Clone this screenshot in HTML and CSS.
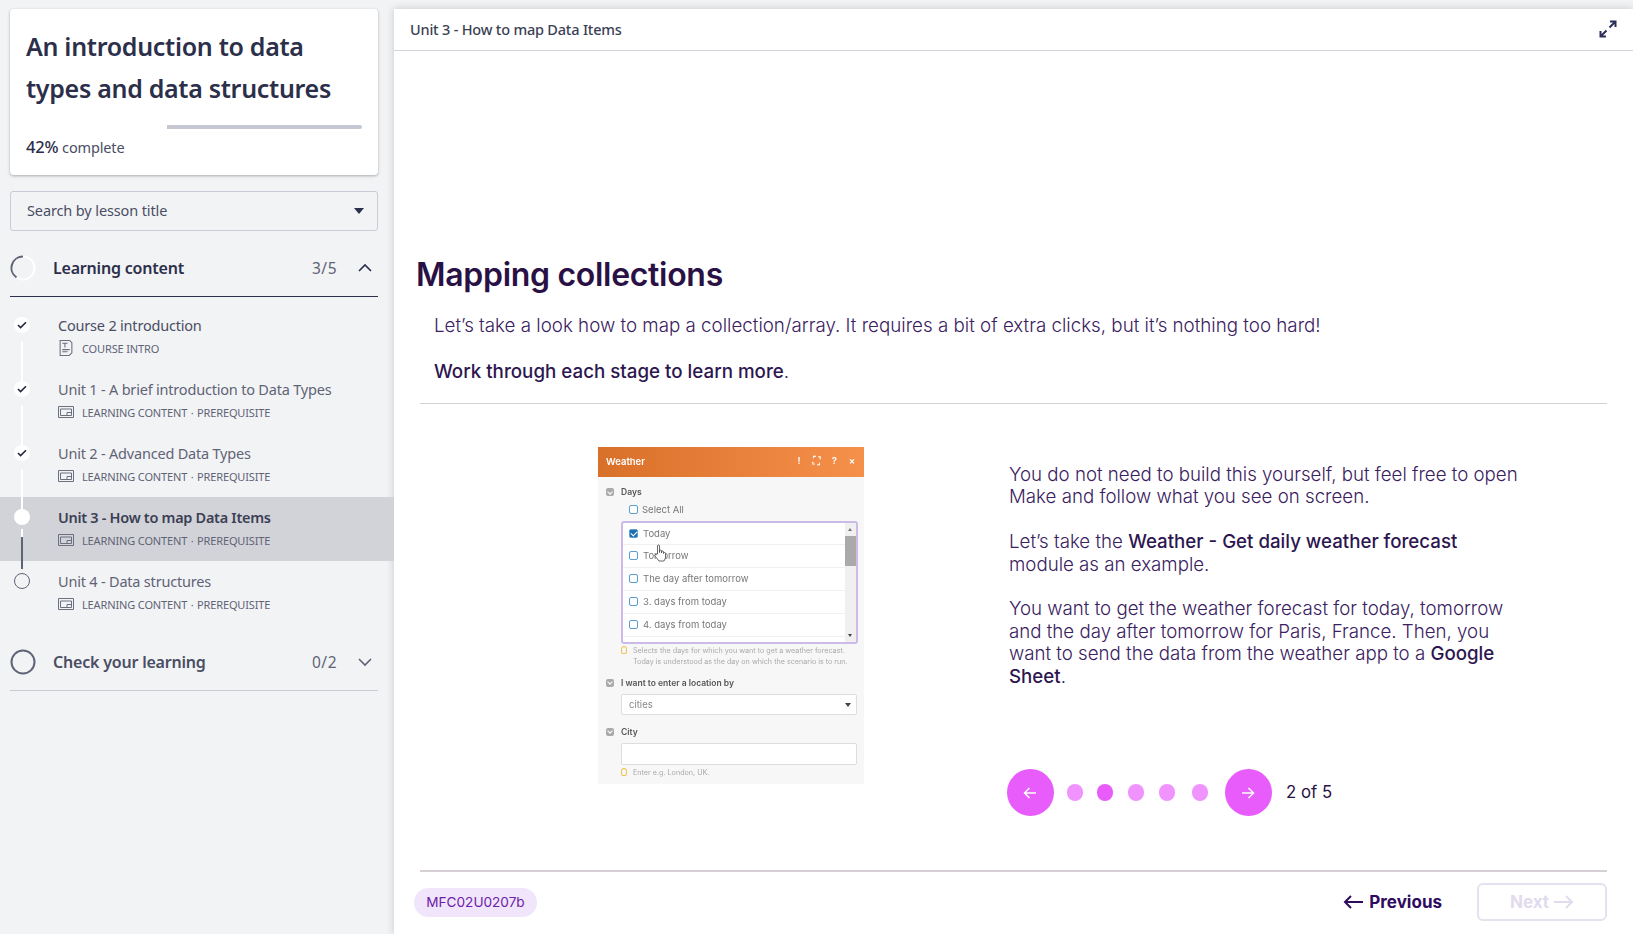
FILE: index.html
```html
<!DOCTYPE html>
<html lang="en">
<head>
    <meta charset="UTF-8">
    <meta name="viewport" content="width=device-width, initial-scale=1.0">
    <title>Unit 3 - How to map Data Items</title>
    <link rel="stylesheet" href="styles.css">
</head>
<body>
    <aside class="sidebar">
        <div class="course-card">
            <h1>An introduction to data types and data structures</h1>
            <div class="progress-track"><div class="progress-fill" style="width: 42%"></div></div>
            <p class="progress-label"><b>42%</b> complete</p>
        </div>

        <div class="search-box">
            <span>Search by lesson title</span>
            <span class="caret"></span>
        </div>

        <div class="section-head section-open">
            <svg class="ring" width="26" height="26" viewBox="0 0 26 26">
                <circle cx="13" cy="13" r="11.5" fill="none" stroke="#fff" stroke-width="2"/>
                <path d="M13 1.5A11.5 11.5 0 0 0 6.5 22.5" fill="none" stroke="#5f6376" stroke-width="2"/>
            </svg>
            <span class="section-title">Learning content</span>
            <span class="section-count">3/5</span>
            <svg class="chevron" width="16" height="10" viewBox="0 0 16 10"><path d="M2 8l6-6 6 6" fill="none" stroke="#2c2f4a" stroke-width="1.6"/></svg>
        </div>

        <ul class="lessons">
            <li class="lesson">
                <span class="dot"><svg width="10" height="8" viewBox="0 0 10 8"><path d="M1 4l2.600 2.600L9 1.200" fill="none" stroke="#23253a" stroke-width="1.6"/></svg></span>
                <div class="lesson-body">
                    <div class="lesson-name lesson-first">Course 2 introduction</div>
                    <div class="lesson-meta">
                        <svg class="doc-icon" width="16" height="16" viewBox="0 0 13 15"><path d="M1 .5h9l2 2v9.500l-2.500 2.500H1z" fill="none" stroke="#6c6f80"/><path d="M3 3h5M5.500 3v4M3 9h7M3 11h5" fill="none" stroke="#6c6f80"/></svg>
                        <span>COURSE INTRO</span>
                    </div>
                </div>
            </li>
            <li class="lesson">
                <span class="dot"><svg width="10" height="8" viewBox="0 0 10 8"><path d="M1 4l2.600 2.600L9 1.200" fill="none" stroke="#23253a" stroke-width="1.6"/></svg></span>
                <div class="lesson-body">
                    <div class="lesson-name">Unit 1 - A brief introduction to Data Types</div>
                    <div class="lesson-meta">
                        <svg class="box-icon" width="16" height="12" viewBox="0 0 16 12"><path d="M.5.500h15v11H.5zM2.500 3h11v6.500h-11zM9 9.500V6.500h4.500" fill="none" stroke="#6c6f80"/></svg>
                        <span>LEARNING CONTENT<span class="sep">·</span>PREREQUISITE</span>
                    </div>
                </div>
            </li>
            <li class="lesson">
                <span class="dot"><svg width="10" height="8" viewBox="0 0 10 8"><path d="M1 4l2.600 2.600L9 1.200" fill="none" stroke="#23253a" stroke-width="1.6"/></svg></span>
                <div class="lesson-body">
                    <div class="lesson-name">Unit 2 - Advanced Data Types</div>
                    <div class="lesson-meta">
                        <svg class="box-icon" width="16" height="12" viewBox="0 0 16 12"><path d="M.5.500h15v11H.5zM2.500 3h11v6.500h-11zM9 9.500V6.500h4.500" fill="none" stroke="#6c6f80"/></svg>
                        <span>LEARNING CONTENT<span class="sep">·</span>PREREQUISITE</span>
                    </div>
                </div>
            </li>
            <li class="lesson lesson-current">
                <span class="dot"></span>
                <div class="lesson-body">
                    <div class="lesson-name">Unit 3 - How to map Data Items</div>
                    <div class="lesson-meta">
                        <svg class="box-icon" width="16" height="12" viewBox="0 0 16 12"><path d="M.5.500h15v11H.5zM2.500 3h11v6.500h-11zM9 9.500V6.500h4.500" fill="none" stroke="#6c6f80"/></svg>
                        <span>LEARNING CONTENT<span class="sep">·</span>PREREQUISITE</span>
                    </div>
                </div>
            </li>
            <li class="lesson lesson-last">
                <span class="dot dot-empty"></span>
                <div class="lesson-body">
                    <div class="lesson-name">Unit 4 - Data structures</div>
                    <div class="lesson-meta">
                        <svg class="box-icon" width="16" height="12" viewBox="0 0 16 12"><path d="M.5.500h15v11H.5zM2.500 3h11v6.500h-11zM9 9.500V6.500h4.500" fill="none" stroke="#6c6f80"/></svg>
                        <span>LEARNING CONTENT<span class="sep">·</span>PREREQUISITE</span>
                    </div>
                </div>
            </li>
        </ul>

        <div class="section-head section-closed">
            <svg class="ring" width="26" height="26" viewBox="0 0 26 26"><circle cx="13" cy="13" r="11.500" fill="none" stroke="#5f6376" stroke-width="2"/></svg>
            <span class="section-title">Check your learning</span>
            <span class="section-count">0/2</span>
            <svg class="chevron" width="16" height="10" viewBox="0 0 16 10"><path d="M2 2l6 6 6-6" fill="none" stroke="#5f6376" stroke-width="1.6"/></svg>
        </div>
    </aside>

    <main class="content">
        <header class="topbar">
            <span>Unit 3 - How to map Data Items</span>
            <svg width="18" height="18" viewBox="0 0 18 18"><path d="M11 1.500h5.500V7M16 2l-5.500 5.500M7 16.500H1.500V11M2 16l5.500-5.500" fill="none" stroke="#2c2f5a" stroke-width="2"/></svg>
        </header>

        <section class="lesson-page">
            <h2>Mapping collections</h2>
            <p class="intro">Let’s take a look how to map a collection/array. It requires a bit of extra clicks, but it’s nothing too hard!</p>
            <p class="intro intro-next"><b>Work through each stage to learn more</b>.</p>
            <hr class="rule">

            <div class="stage">
                <div class="mock">
                    <div class="mock-head">
                        <span>Weather</span>
                        <span class="mock-tools"><i>!</i><i>⛶</i><i>?</i><i>×</i></span>
                    </div>
                    <div class="mock-body">
                        <div class="mock-label"><b class="fold"></b>Days</div>
                        <div class="mock-check mock-selectall"><b class="box"></b>Select All</div>
                        <div class="mock-list">
                            <div class="mock-rows">
                                <div class="mock-row"><b class="box box-on"></b>Today</div>
                                <div class="mock-row"><b class="box"></b>Tomorrow</div>
                                <div class="mock-row"><b class="box"></b>The day after tomorrow</div>
                                <div class="mock-row"><b class="box"></b>3. days from today</div>
                                <div class="mock-row"><b class="box"></b>4. days from today</div>
                            </div>
                            <div class="mock-scroll"><span class="mock-thumb"></span></div>
                            <svg class="mock-hand" width="13" height="18" viewBox="0 0 13 18"><path d="M3.500 10V2a1 1 0 0 1 2 0v6.500V7a1 1 0 0 1 2 0v2V8a1 1 0 0 1 2 0v1.500a1 1 0 0 1 2 0V14l-1.500 3H5L1 12c-.6-1 .6-2 1.500-1.300z" fill="#fff" stroke="#444" stroke-width=".8"/></svg>
                        </div>
                        <div class="mock-hint"><span class="bulb"></span><span>Selects the days for which you want to get a weather forecast.<br>Today is understood as the day on which the scenario is to run.</span></div>
                        <div class="mock-label mock-label-2"><b class="fold"></b>I want to enter a location by</div>
                        <div class="mock-input mock-select">cities<span class="mock-caret"></span></div>
                        <div class="mock-label mock-label-3"><b class="fold"></b>City</div>
                        <div class="mock-input mock-city"></div>
                        <div class="mock-hint mock-hint-2"><span class="bulb"></span><span>Enter e.g. London, UK.</span></div>
                    </div>
                </div>

                <div class="stage-text">
                    <p>You do not need to build this yourself, but feel free to open Make and follow what you see on screen.</p>
                    <p>Let’s take the <b>Weather - Get daily weather forecast</b> module as an example.</p>
                    <p>You want to get the weather forecast for today, tomorrow and the day after tomorrow for Paris, France. Then, you want to send the data from the weather app to a <b>Google Sheet</b>.</p>
                    <div class="pager">
                        <button class="round"><svg width="14" height="12" viewBox="0 0 14 12"><path d="M13 6H2M6.500 1L1.500 6l5 5" fill="none" stroke="#fff" stroke-width="1.500"/></svg></button>
                        <span class="pip"></span>
                        <span class="pip pip-on"></span>
                        <span class="pip"></span>
                        <span class="pip"></span>
                        <span class="pip"></span>
                        <button class="round"><svg width="14" height="12" viewBox="0 0 14 12"><path d="M1 6h11M7.500 1l5 5-5 5" fill="none" stroke="#fff" stroke-width="1.500"/></svg></button>
                        <span class="pager-count">2 of 5</span>
                    </div>
                </div>
            </div>

            <hr class="rule rule-foot">
            <footer class="page-foot">
                <span class="code-pill">MFC02U0207b</span>
                <span class="foot-prev"><svg width="20" height="14" viewBox="0 0 20 14"><path d="M20 7H2M8 1L2 7l6 6" fill="none" stroke="#2e0b5e" stroke-width="2"/></svg>Previous</span>
                <span class="foot-next">Next<svg width="20" height="14" viewBox="0 0 20 14"><path d="M0 7h18M12 1l6 6-6 6" fill="none" stroke="#e2dbed" stroke-width="2"/></svg></span>
            </footer>
        </section>
    </main>
</body>
</html>
```

FILE: styles.css
```css
* {
    box-sizing: border-box;
}

body {
    margin: 0;
    height: 934px;
    overflow: hidden;
    display: flex;
    background-color: #f2f3f5;
    color: #2c2f4a;
    font-family: 'Noto Sans', sans-serif;
}

/* left column */
.sidebar {
    width: 394px;
    flex-shrink: 0;
    padding-top: 9px;
}

.course-card {
    width: 368px;
    height: 166px;
    margin-left: 10px;
    padding: 16px 16px 0;
    background-color: #fff;
    border-radius: 4px;
    box-shadow: 0 1px 3px rgba(0, 0, 0, 0.3);
}

.course-card h1 {
    margin: 0;
    font-size: 25px;
    line-height: 42px;
    font-weight: 600;
    color: #2c2f4a;
    letter-spacing: -0.3px;
}

.progress-track {
    height: 4px;
    margin-top: 16px;
    background-color: #c5c8d2;
    border-radius: 2px;
}

.progress-fill {
    height: 4px;
    background-color: #fff;
}

.progress-label {
    margin: 7px 0 0;
    font-size: 14.500px;
    line-height: 22px;
    letter-spacing: -0.15px;
    color: #4a4d63;
}

.progress-label b {
    font-weight: 500;
    font-size: 16.500px;
    color: #2c2f4a;
}

.search-box {
    width: 368px;
    height: 40px;
    margin: 16px 0 0 10px;
    padding: 0 13px 2px 16px;
    display: flex;
    align-items: center;
    justify-content: space-between;
    border: 1px solid #c9cbd6;
    border-radius: 3px;
    font-size: 14.500px;
    letter-spacing: -0.12px;
    color: #4a4d63;
}

.caret {
    width: 0;
    height: 0;
    margin-top: 2px;
    border-left: 5px solid transparent;
    border-right: 5px solid transparent;
    border-top: 6px solid #2c2f4a;
}

.section-head {
    width: 368px;
    margin-left: 10px;
    display: flex;
    align-items: center;
    border-bottom: 1px solid #2c2f4a;
}

.section-open {
    height: 66px;
    padding-top: 9px;
}

.section-closed {
    height: 58px;
    margin-top: 8px;
    border-bottom-color: #c9cbd6;
}

.ring {
    flex-shrink: 0;
}

.section-title {
    margin-left: 17px;
    font-size: 16px;
    font-weight: 600;
    color: #2c2f4a;
    letter-spacing: -0.2px;
}

.section-closed .section-title {
    color: #4a4d63;
}

.section-count {
    margin-left: auto;
    font-size: 15.500px;
    color: #5f6376;
    letter-spacing: 0.5px;
}

.chevron {
    margin: 0 5px 0 20px;
}

.lessons {
    list-style: none;
    margin: 8px 0 0;
    padding: 0;
}

.lesson {
    position: relative;
    height: 64px;
    display: flex;
    padding-left: 14px;
}

.lesson::after {
    content: "";
    position: absolute;
    left: 21px;
    top: 37px;
    width: 2px;
    height: 40px;
    background-color: #fff;
    z-index: 1;
}

.lesson-current {
    background-color: #d2d3d8;
}

.lesson-current::after {
    top: 32px;
    height: 40px;
    background: linear-gradient(#fff 8px, #5f6376 8px);
}

.lesson-last::after {
    display: none;
}

.dot {
    width: 16px;
    height: 16px;
    margin-top: 12px;
    flex-shrink: 0;
    display: flex;
    align-items: center;
    justify-content: center;
    background-color: #fff;
    border-radius: 50%;
}

.dot-empty {
    background-color: transparent;
    border: 1px solid #5f6376;
}

.lesson-body {
    margin-left: 28px;
    padding-top: 9px;
}

.lesson-name {
    font-size: 14.500px;
    line-height: 22px;
    letter-spacing: -0.2px;
    color: #5f6376;
}

.lesson-first {
    color: #4a4d63;
}

.lesson-current .lesson-name {
    font-weight: 600;
    letter-spacing: -0.3px;
    color: #3c3f55;
}

.lesson-meta {
    display: flex;
    align-items: center;
    height: 20px;
    margin-top: 2px;
    font-size: 11px;
    letter-spacing: -0.14px;
    color: #5f6376;
}

.sep {
    margin: 0 3.500px;
}

.doc-icon {
    margin-right: 8px;
}

.box-icon {
    margin-right: 8px;
}

/* main column */
.content {
    flex: 1;
    margin-top: 9px;
    background-color: #fff;
    box-shadow: 0 0 8px rgba(0, 0, 0, 0.18);
}

.topbar {
    height: 42px;
    padding: 0 16px 2px;
    display: flex;
    align-items: center;
    justify-content: space-between;
    border-bottom: 1px solid #d2d3dc;
    font-size: 14.500px;
    font-weight: 500;
    letter-spacing: -0.2px;
    color: #3c3f55;
}

.lesson-page {
    padding: 0 26px;
    color: #3a2160;
    font-family: Inter, sans-serif;
    font-weight: 300;
}

.lesson-page b {
    font-weight: 500;
    color: #2d1650;
}

.lesson-page h2 {
    margin: 200px 0 0 -4px;
    font-size: 32px;
    line-height: 48px;
    font-weight: 600;
    letter-spacing: -0.3px;
    color: #2a1145;
}

.intro {
    margin: 13px 0 0 14px;
    font-size: 18.750px;
    line-height: 28px;
}

.intro-next {
    margin-top: 18px;
}

.rule {
    margin: 17px 0 0;
    border: none;
    height: 1px;
    background-color: #d6d0d6;
}

.rule-foot {
    height: 2px;
    margin-top: 0;
}

.stage {
    height: 466px;
    display: flex;
}

.stage-text {
    width: 510px;
    margin-left: 145px;
    padding-top: 60px;
    font-size: 18.700px;
    line-height: 22.400px;
}

.stage-text p {
    margin: 0 0 22.400px;
}

.pager {
    position: relative;
    display: flex;
    align-items: center;
    margin: 81px 0 0 -2.500px;
}

.round {
    width: 47px;
    height: 47px;
    padding: 0;
    display: flex;
    align-items: center;
    justify-content: center;
    border: none;
    border-radius: 50%;
    background-color: #e85cfc;
}

.pip {
    width: 16.500px;
    height: 16.500px;
    margin-left: 14.500px;
    border-radius: 50%;
    background-color: #f093ff;
}

.pip-on {
    background-color: #e85cfc;
}

.pip:nth-child(2) {
    margin-left: 13px;
}

.pip:nth-child(3) {
    margin-left: 13.500px;
}

.pip:nth-child(6) {
    margin-left: 16.500px;
}

.pip + .round {
    margin-left: 16.500px;
}

.pager-count {
    margin-left: 14.500px;
    font-size: 16.800px;
    font-weight: 400;
    color: #2a1145;
}

.page-foot {
    height: 60px;
    display: flex;
    align-items: center;
    margin-left: -6px;
}

.code-pill {
    width: 123px;
    height: 29px;
    display: flex;
    align-items: center;
    justify-content: center;
    background-color: #f0e5fb;
    border-radius: 15px;
    font-size: 13.600px;
    font-weight: 400;
    color: #6b21a8;
}

.foot-prev {
    margin-left: auto;
    display: flex;
    align-items: center;
    gap: 6px;
    font-size: 17px;
    font-weight: 700;
    color: #2e0b5e;
}

.foot-next {
    width: 130px;
    height: 38px;
    margin-left: 35px;
    display: flex;
    align-items: center;
    justify-content: center;
    gap: 5px;
    border: 2px solid #e6e1ef;
    border-radius: 6px;
    font-size: 17px;
    font-weight: 700;
    color: #e2dbed;
}

/* screenshot of the Weather module dialog */
.mock {
    width: 266px;
    height: 337px;
    margin: 43px 0 0 178px;
    flex-shrink: 0;
    overflow: hidden;
    background-color: #f7f7f7;
    color: #777;
    font-size: 9.500px;
    font-weight: 400;
    filter: blur(0.3px);
}

.mock-head {
    height: 30px;
    padding: 0 7px 2px 8px;
    display: flex;
    align-items: center;
    justify-content: space-between;
    background: linear-gradient(to right, #d9702a, #f5904a);
    color: #fff;
    font-weight: 600;
}

.mock-tools {
    display: flex;
    gap: 7.700px;
}

.mock-tools i {
    width: 10px;
    font-style: normal;
    text-align: center;
}

.mock-body {
    padding: 8px 8px 0;
}

.mock-label {
    display: flex;
    align-items: center;
    gap: 7px;
    height: 14px;
    font-weight: 600;
    font-size: 8.500px;
    color: #555;
}

.fold {
    position: relative;
    width: 8px;
    height: 8px;
    background-color: #aaa;
    border-radius: 2px;
}

.fold::after {
    content: "";
    position: absolute;
    left: 2px;
    top: 1.500px;
    width: 3px;
    height: 3px;
    border-right: 1px solid #fff;
    border-bottom: 1px solid #fff;
    transform: rotate(45deg);
}

.mock-check {
    display: flex;
    align-items: center;
    gap: 4px;
}

.mock-selectall {
    height: 18px;
    margin: 1px 0 0 23px;
}

.box {
    position: relative;
    width: 9px;
    height: 9px;
    flex-shrink: 0;
    background-color: #fff;
    border: 1px solid #5a9fd0;
    border-radius: 2px;
}

.box-on {
    background-color: #1d6fb0;
}

.box-on::after {
    content: "";
    position: absolute;
    left: 1.500px;
    top: 0;
    width: 3px;
    height: 5px;
    border-right: 1px solid #fff;
    border-bottom: 1px solid #fff;
    transform: rotate(45deg);
}

.mock-list {
    position: relative;
    width: 237px;
    height: 123px;
    margin: 2.500px 0 0 15px;
    display: flex;
    overflow: hidden;
    background-color: #fff;
    border: 2px solid #cbbbe6;
    border-radius: 3px;
}

.mock-rows {
    flex: 1;
}

.mock-row {
    height: 23px;
    padding-left: 6px;
    display: flex;
    align-items: center;
    gap: 5px;
    border-bottom: 1px solid #f0f0f0;
}

.mock-row:first-child {
    height: 22px;
}

.mock-scroll {
    position: relative;
    width: 11px;
    padding-top: 13px;
    background-color: #f0f0f0;
}

.mock-scroll::before,
.mock-scroll::after {
    content: "";
    position: absolute;
    left: 3px;
    border-left: 2.500px solid transparent;
    border-right: 2.500px solid transparent;
}

.mock-scroll::before {
    top: 5px;
    border-bottom: 3px solid #777;
}

.mock-scroll::after {
    bottom: 5px;
    border-top: 3px solid #444;
}

.mock-thumb {
    display: block;
    height: 30px;
    background-color: #aaa;
}

.mock-hand {
    position: absolute;
    left: 31px;
    top: 21px;
}

.mock-hint {
    display: flex;
    gap: 6px;
    margin: 2.500px 0 0 15px;
    font-size: 7.200px;
    line-height: 10.500px;
    white-space: nowrap;
    color: #aaa;
}

.bulb {
    width: 6px;
    height: 8px;
    flex-shrink: 0;
    border: 1px solid #f2c14e;
    border-radius: 50% 50% 2px 2px;
}

.mock-label-2 {
    margin-top: 8.700px;
}

.mock-label-3 {
    margin-top: 10px;
}

.mock-input {
    position: relative;
    width: 236px;
    height: 21px;
    margin: 4.300px 0 0 15px;
    padding-left: 7px;
    display: flex;
    align-items: center;
    background-color: #fff;
    border: 1px solid #ddd;
    border-radius: 2px;
    color: #888;
}

.mock-city {
    height: 22px;
    margin-top: 4px;
}

.mock-caret {
    position: absolute;
    right: 5px;
    top: 8px;
    border-left: 3px solid transparent;
    border-right: 3px solid transparent;
    border-top: 4px solid #444;
}

.mock-hint-2 {
    margin-top: 3px;
}
```
